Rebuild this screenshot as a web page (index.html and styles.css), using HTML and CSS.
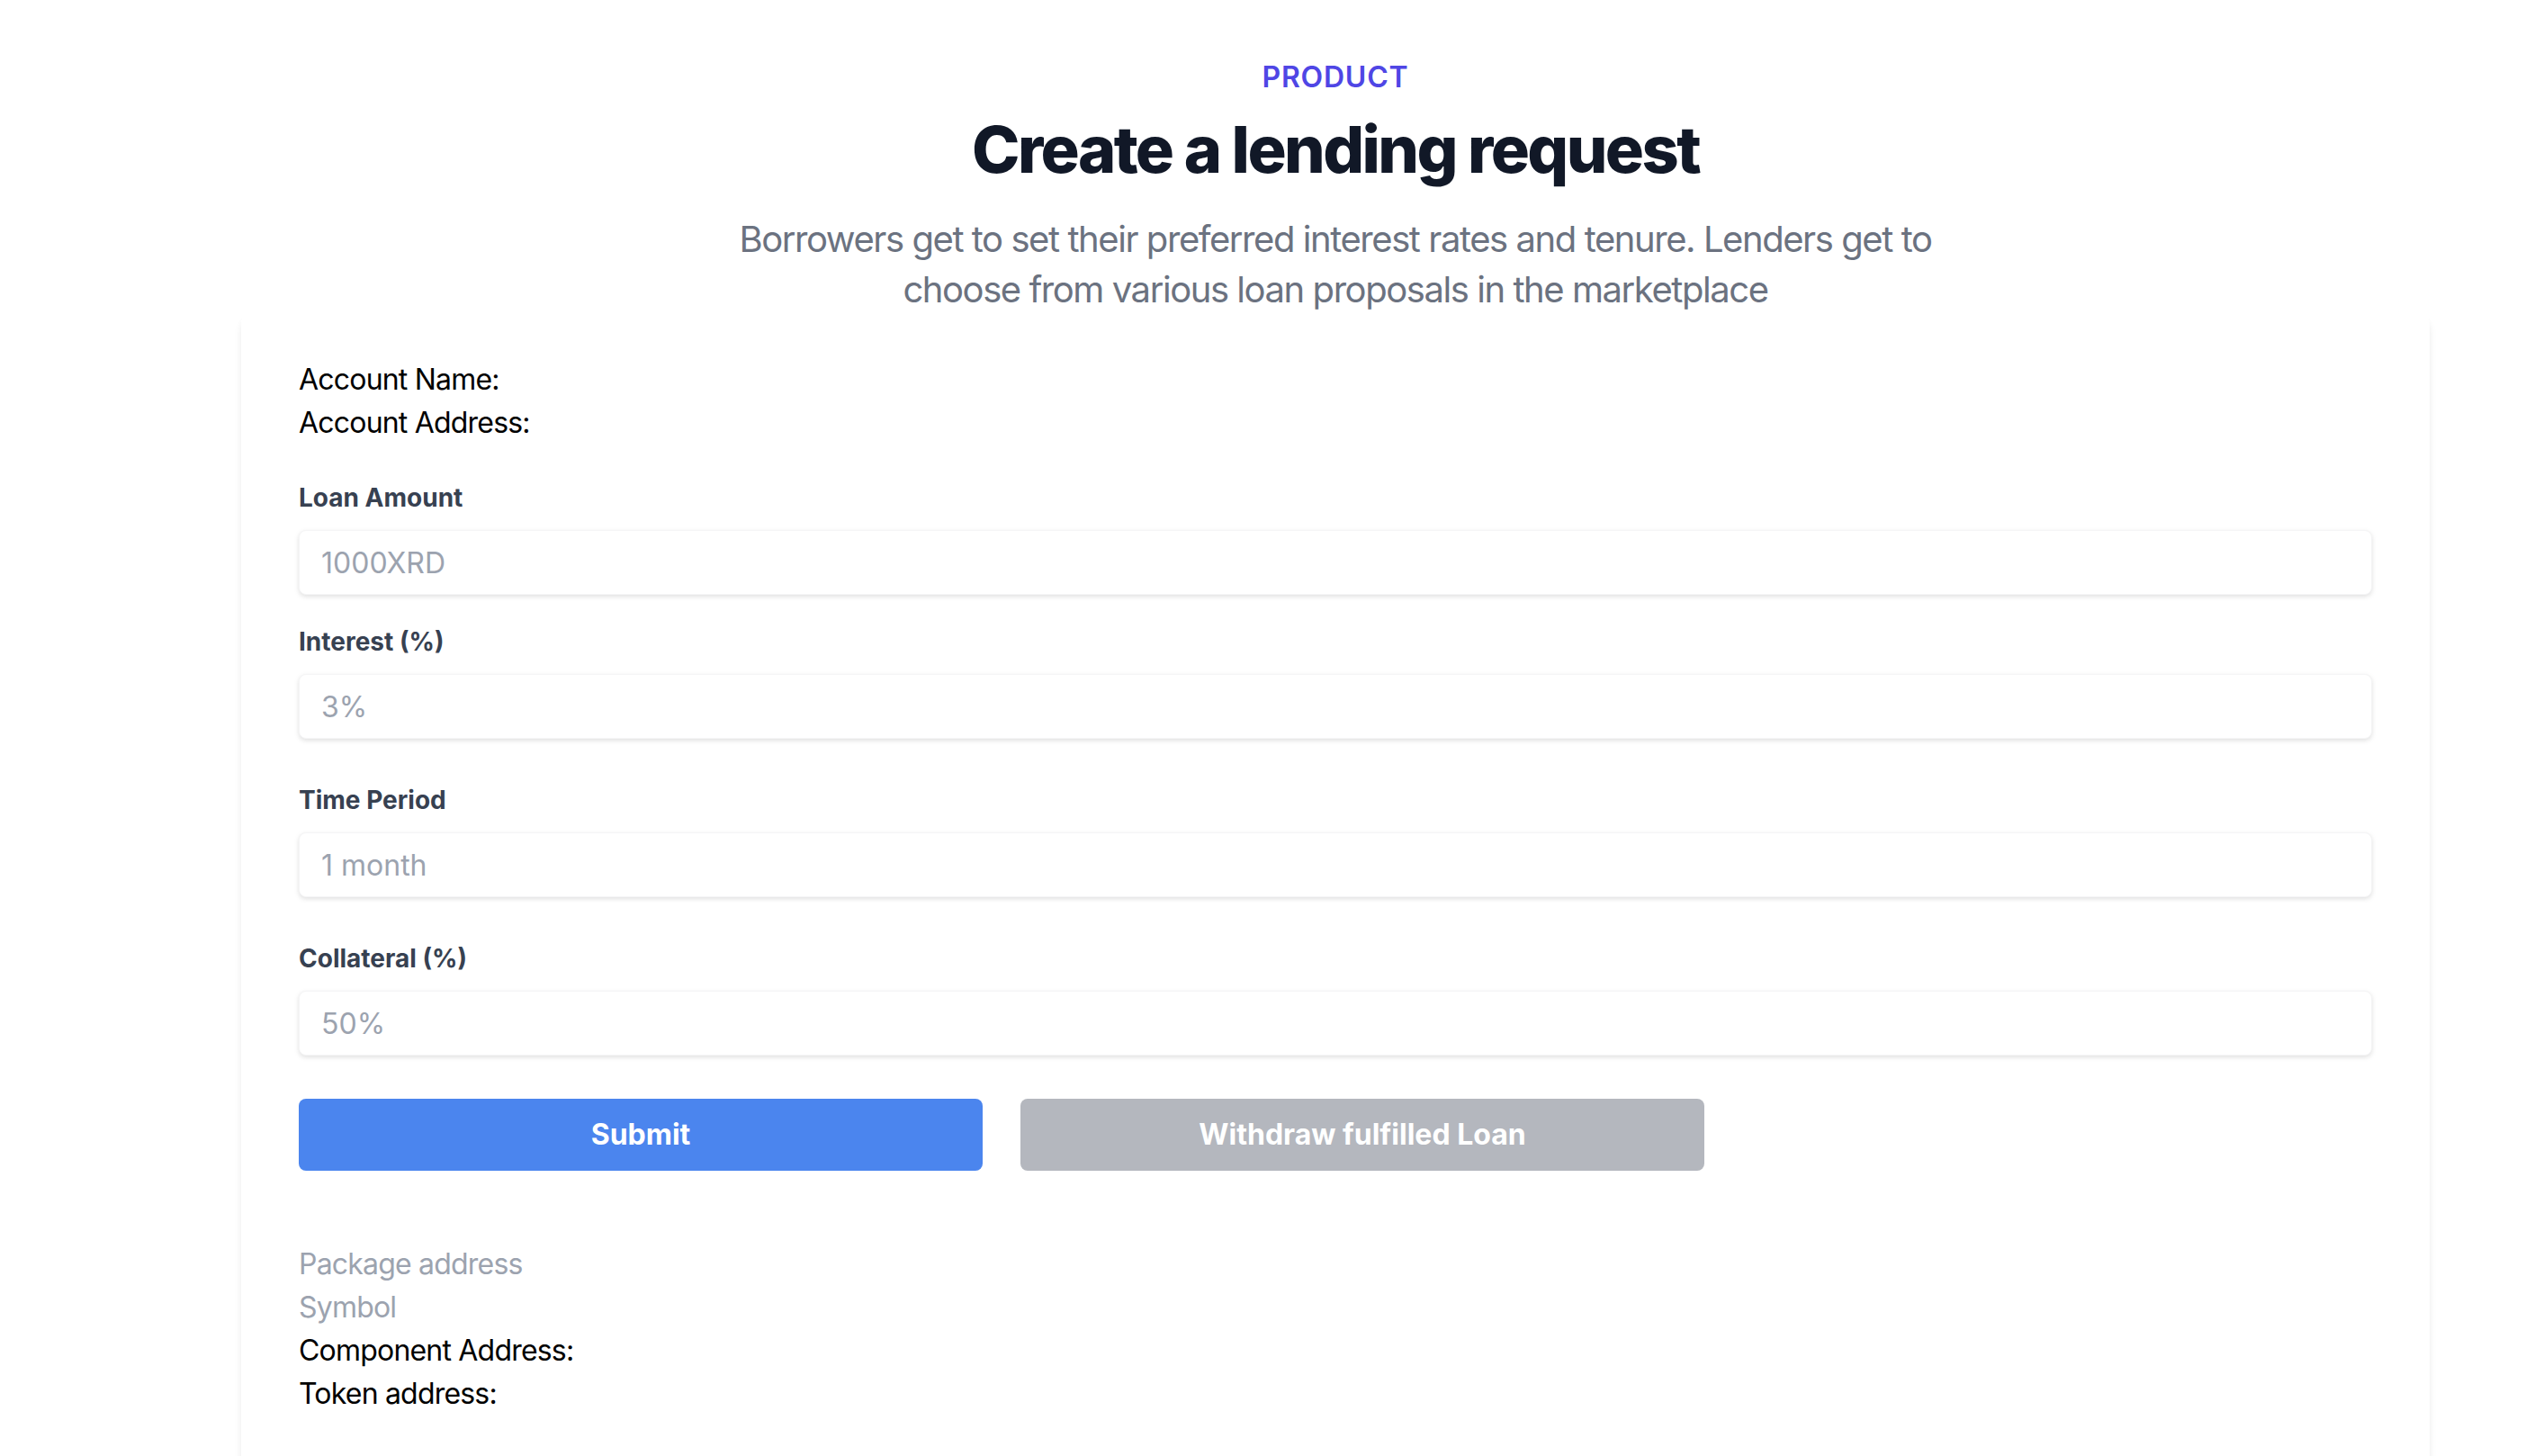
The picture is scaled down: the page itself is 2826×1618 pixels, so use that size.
FILE: index.html
```html
<!DOCTYPE html>
<html lang="en">
<head>
<meta charset="utf-8">
<title>Create a lending request</title>
<link rel="stylesheet" href="styles.css">
</head>
<body>
<main class="page">
  <header class="intro">
    <p class="eyebrow">Product</p>
    <h1 class="title">Create a lending request</h1>
    <p class="lead">Borrowers get to set their preferred interest rates and tenure. Lenders get to choose from various loan proposals in the marketplace</p>
  </header>
  <form class="card">
    <div class="account">
      <div>Account Name:</div>
      <div>Account Address:</div>
    </div>
    <div class="field field-first">
      <label class="label" for="amount">Loan Amount</label>
      <input class="input" id="amount" type="text" placeholder="1000XRD">
    </div>
    <div class="field">
      <label class="label" for="interest">Interest (%)</label>
      <input class="input" id="interest" type="text" placeholder="3%">
    </div>
    <div class="field">
      <label class="label" for="period">Time Period</label>
      <input class="input" id="period" type="text" placeholder="1 month">
    </div>
    <div class="field">
      <label class="label" for="collateral">Collateral (%)</label>
      <input class="input" id="collateral" type="text" placeholder="50%">
    </div>
    <div class="actions">
      <button class="btn btn-primary" type="button">Submit</button>
      <button class="btn btn-muted" type="button">Withdraw fulfilled Loan</button>
    </div>
    <div class="info">
      <div class="muted">Package address</div>
      <div class="muted">Symbol</div>
      <div>Component Address:</div>
      <div>Token address:</div>
    </div>
  </form>
</main>
</body>
</html>
```
FILE: styles.css
```css
* { box-sizing: border-box; }
html, body { margin: 0; padding: 0; background: #ffffff; }
body {
  font-family: Inter, "Noto Sans", "Liberation Sans", sans-serif;
  color: #000;
  font-size: 32px;
  line-height: 48px;
}
.page {
  width: 2432px;
  margin-left: 268px;
}
.intro {
  padding-top: 62px;
  text-align: center;
}
.eyebrow {
  margin: 0;
  font-size: 32px;
  line-height: 48px;
  font-weight: 600;
  letter-spacing: 0.025em;
  text-transform: uppercase;
  color: #4f46e5;
}
.title {
  margin: 16px 0 0;
  font-size: 72px;
  line-height: 80px;
  font-weight: 800;
  letter-spacing: -0.036em;
  color: #111827;
}
.lead {
  margin: 32px auto 0;
  max-width: 1344px;
  font-size: 40px;
  line-height: 56px;
  letter-spacing: -0.036em;
  color: #6b7280;
}
.card {
  background: #fff;
  border-radius: 8px;
  box-shadow: 0 8px 12px -2px rgba(0,0,0,0.08), 0 4px 8px -2px rgba(0,0,0,0.05);
  padding: 48px 64px 64px;
}
.account { margin-bottom: 39px; letter-spacing: -0.025em; }
.field { margin-bottom: 48px; }
.field-first { margin-bottom: 32px; }
.label {
  display: block;
  font-size: 28px;
  line-height: 40px;
  font-weight: 700;
  color: #374151;
  margin-bottom: 16px;
}
.input {
  display: block;
  width: 100%;
  height: 72px;
  border: 1px solid #f5f5f6;
  border-radius: 8px;
  padding: 0 24px;
  font-family: inherit;
  font-size: 32px;
  line-height: 40px;
  color: #374151;
  background: #fff;
  box-shadow: 0 2px 6px 0 rgba(0,0,0,0.08), 0 2px 4px 0 rgba(0,0,0,0.05);
  outline: none;
}
.input::placeholder { color: #9ca3af; }
.actions {
  display: flex;
  gap: 42px;
  margin-bottom: 80px;
}
.btn {
  width: 760px;
  height: 80px;
  border: 0;
  border-radius: 8px;
  font-family: inherit;
  font-size: 32px;
  line-height: 48px;
  font-weight: 700;
  color: #fff;
}
.btn-primary { background: #4b85ee; }
.btn-muted { background: #b4b7be; }
.info { font-size: 32px; line-height: 48px; letter-spacing: -0.025em; }
.muted { color: #9ca3af; }
```
